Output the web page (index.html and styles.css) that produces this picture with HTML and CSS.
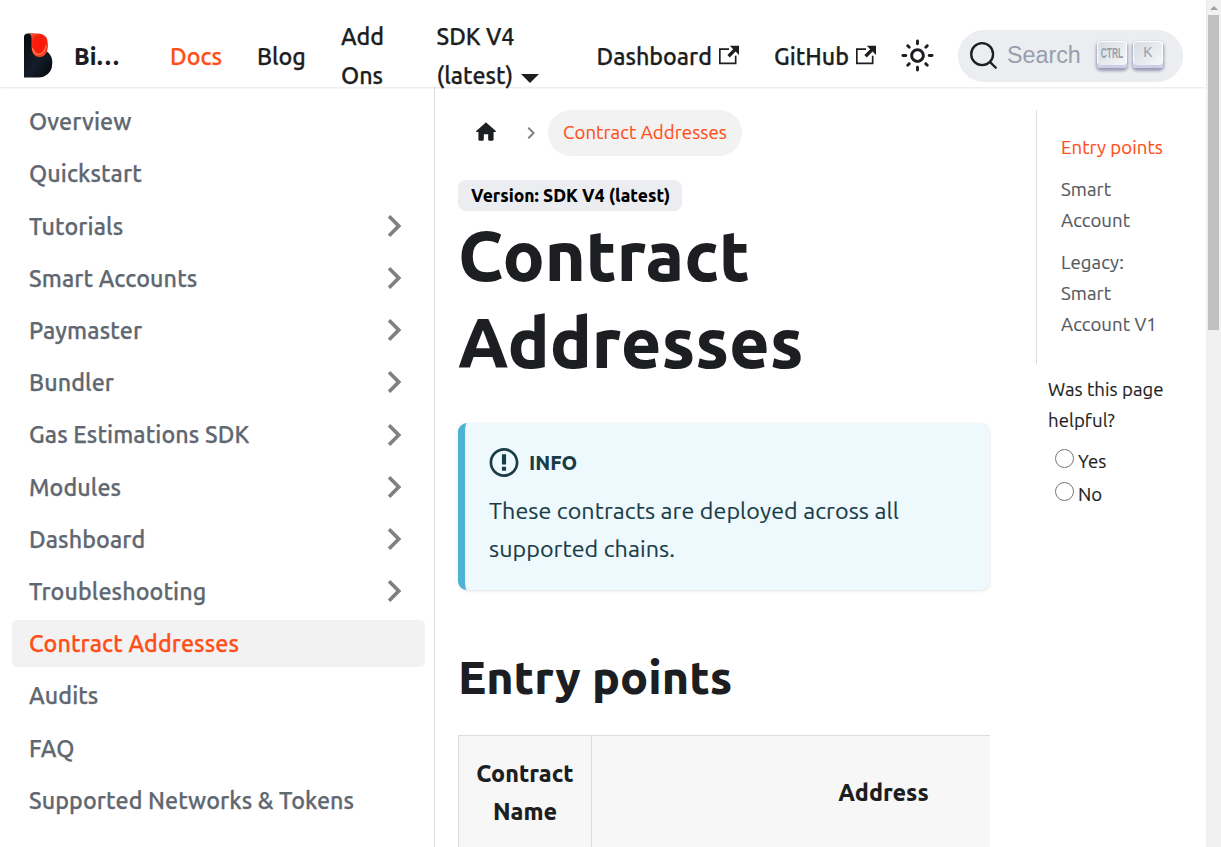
FILE: index.html
```html
<!DOCTYPE html>
<html lang="en">
<head>
<meta charset="utf-8">
<title>Contract Addresses</title>
<link rel="stylesheet" href="styles.css">
</head>
<body>
<svg class="defs" width="0" height="0">
  <symbol id="chev" viewBox="0 0 24 24"><path fill="currentColor" d="M8.59 16.59L13.17 12 8.59 7.41 10 6l6 6-6 6z"/></symbol>
  <symbol id="ext" viewBox="0 0 24 24"><path fill="currentColor" d="M21 13v10h-21v-19h12v2h-10v15h17v-8h2zm3-12h-10.988l4.035 4-6.977 7.07 2.828 2.828 6.977-7.07 4.125 4.172v-11z"/></symbol>
</svg>
<div class="window">
<div class="page">
  <nav class="navbar">
    <svg class="logo" viewBox="0 0 29 45">
      <defs>
        <linearGradient id="body" x1="0" y1="0" x2="1" y2="1"><stop offset="0" stop-color="#08090c"/><stop offset=".55" stop-color="#141d29"/><stop offset="1" stop-color="#07080b"/></linearGradient>
        <radialGradient id="drop" cx=".55" cy=".45" r=".6"><stop offset="0" stop-color="#ff1408"/><stop offset=".6" stop-color="#f5200f"/><stop offset="1" stop-color="#ff5a30"/></radialGradient>
      </defs>
      <path fill="url(#body)" d="M0 44.500V4Q0 .5 4 .5H10L23.500 19Q28.300 22.500 28.300 30Q28.300 40 20 43.500Q17.500 44.500 14 44.500Z"/>
      <path fill="url(#drop)" d="M5.500 .5H15Q24 1 24 12Q23.500 24 15.500 24Q7.500 23.500 7.500 14V6Q7.500 2 5.500 .5Z"/>
      <path fill="none" stroke="#ff7a4c" stroke-width="1.200" d="M8.500 15Q10 21.500 15 21.500Q20.500 20.500 22.500 12"/>
    </svg>
    <b class="brand">Bi…</b>
    <a class="nav-docs">Docs</a>
    <a class="nav-blog">Blog</a>
    <a class="nav-add">Add<br>Ons</a>
    <a class="nav-sdk">SDK V4<br><span>(latest)</span><i class="caret"></i></a>
    <a class="nav-dash"><span>Dashboard</span><svg class="ext"><use href="#ext"/></svg></a>
    <a class="nav-git"><span>GitHub</span><svg class="ext"><use href="#ext"/></svg></a>
    <svg class="sun" viewBox="0 0 24 24"><path fill="currentColor" d="M12,9c1.650,0,3,1.350,3,3s-1.350,3-3,3s-3-1.350-3-3S10.350,9,12,9 M12,7c-2.760,0-5,2.240-5,5s2.240,5,5,5s5-2.240,5-5 S14.760,7,12,7L12,7z M2,13l2,0c0.550,0,1-0.450,1-1s-0.450-1-1-1l-2,0c-0.550,0-1,0.450-1,1S1.450,13,2,13z M20,13l2,0c0.550,0,1-0.450,1-1 s-0.450-1-1-1l-2,0c-0.550,0-1,0.450-1,1S19.450,13,20,13z M11,2v2c0,0.550,0.450,1,1,1s1-0.450,1-1V2c0-0.550-0.450-1-1-1S11,1.450,11,2z M11,20v2c0,0.550,0.450,1,1,1s1-0.450,1-1v-2c0-0.550-0.450-1-1-1C11.450,19,11,19.450,11,20z M5.990,4.580c-0.390-0.390-1.030-0.390-1.410,0 c-0.390,0.390-0.390,1.030,0,1.410l1.060,1.060c0.390,0.390,1.030,0.390,1.410,0s0.390-1.030,0-1.410L5.990,4.580z M18.360,16.950 c-0.390-0.390-1.030-0.390-1.410,0c-0.390,0.390-0.390,1.030,0,1.410l1.060,1.060c0.390,0.390,1.030,0.390,1.410,0c0.390-0.390,0.390-1.030,0-1.410 L18.360,16.950z M19.420,5.990c0.390-0.390,0.390-1.030,0-1.410c-0.390-0.390-1.030-0.390-1.410,0l-1.060,1.060c-0.390,0.390-0.390,1.030,0,1.410 s1.030,0.390,1.410,0L19.420,5.990z M7.050,18.360c0.390-0.390,0.390-1.030,0-1.410c-0.390-0.390-1.030-0.390-1.410,0l-1.060,1.060 c-0.390,0.390-0.390,1.030,0,1.410s1.030,0.390,1.410,0L7.050,18.360z"/></svg>
    <div class="search">
      <svg class="glass" viewBox="0 0 20 20"><path d="M14.386 14.386l4.088 4.088-4.088-4.088c-2.942 2.942-7.711 2.942-10.653 0s-2.942-7.711 0-10.653 7.711-2.942 10.653 0 2.942 7.711 0 10.653z" stroke="currentColor" fill="none" stroke-width="1.600" stroke-linecap="round" stroke-linejoin="round"/></svg>
      <span class="placeholder">Search</span>
      <kbd class="key"><span class="ctrl">CTRL</span></kbd>
      <kbd class="key">K</kbd>
    </div>
  </nav>
  <div class="columns">
    <aside class="sidebar">
      <a class="item">Overview</a>
      <a class="item">Quickstart</a>
      <a class="item">Tutorials<svg class="chev"><use href="#chev"/></svg></a>
      <a class="item">Smart Accounts<svg class="chev"><use href="#chev"/></svg></a>
      <a class="item">Paymaster<svg class="chev"><use href="#chev"/></svg></a>
      <a class="item">Bundler<svg class="chev"><use href="#chev"/></svg></a>
      <a class="item">Gas Estimations SDK<svg class="chev"><use href="#chev"/></svg></a>
      <a class="item">Modules<svg class="chev"><use href="#chev"/></svg></a>
      <a class="item">Dashboard<svg class="chev"><use href="#chev"/></svg></a>
      <a class="item">Troubleshooting<svg class="chev"><use href="#chev"/></svg></a>
      <a class="item active">Contract Addresses</a>
      <a class="item">Audits</a>
      <a class="item">FAQ</a>
      <a class="item">Supported Networks &amp; Tokens</a>
    </aside>
    <main class="doc">
      <div class="crumbs">
        <svg class="home" viewBox="0 0 24 24"><path fill="currentColor" d="M10 19v-5h4v5c0 .55.45 1 1 1h3c.55 0 1-.45 1-1v-7h1.700c.46 0 .68-.57.33-.87L12.670 3.600c-.38-.34-.96-.34-1.340 0l-8.360 7.530c-.34.3-.13.87.33.87H5v7c0 .55.45 1 1 1h3c.55 0 1-.45 1-1z"/></svg>
        <svg class="sep"><use href="#chev"/></svg>
        <span class="pill">Contract Addresses</span>
      </div>
      <span class="badge">Version: SDK V4 (latest)</span>
      <h1>Contract<br>Addresses</h1>
      <section class="info">
        <div class="info-head">
          <svg class="info-icon" viewBox="0 0 14 16"><path fill="currentColor" fill-rule="evenodd" d="M7 2.300c3.140 0 5.700 2.560 5.700 5.700s-2.560 5.700-5.700 5.700A5.710 5.710 0 0 1 1.300 8c0-3.140 2.560-5.700 5.700-5.700zM7 1C3.140 1 0 4.140 0 8s3.140 7 7 7 7-3.140 7-7-3.140-7-7-7zm1 3H6v5h2V4zm0 6H6v2h2v-2z"/></svg>
          <b>INFO</b>
        </div>
        <p>These contracts are deployed across all<br>supported chains.</p>
      </section>
      <h2>Entry points</h2>
      <div class="table">
        <div class="th name"><span>Contract</span><span>Name</span></div>
        <div class="th address">Address</div>
      </div>
    </main>
    <aside class="right">
      <div class="toc">
        <a class="on">Entry points</a>
        <a>Smart<br>Account</a>
        <a>Legacy:<br>Smart<br>Account V1</a>
      </div>
      <div class="ask">Was this page<br>helpful?</div>
      <label class="opt"><i class="radio"></i><span>Yes</span></label>
      <label class="opt"><i class="radio"></i><span>No</span></label>
    </aside>
  </div>
</div>
<div class="scrollbar"><i class="up"></i><div class="thumb"></div></div>
</div>
</body>
</html>
```
FILE: styles.css
```css
* { box-sizing: border-box; }
body { margin: 0; overflow: hidden; background: #fff; color: #1c1e21; font-family: Ubuntu, "Noto Sans", sans-serif; font-size: 23.270px; font-weight: 400; line-height: 38.4px; }
b { font-weight: 780; }
.defs { display: block; position: absolute; }
.window { display: flex; width: 1221px; height: 847px; overflow: hidden; }
.page { flex: 1; display: flex; flex-direction: column; min-width: 0; }
span { white-space: nowrap; }

.navbar { position: relative; z-index: 2; height: 87px; flex: none; display: flex; align-items: center; padding: 24px 0 0 24px; background: #fff; box-shadow: 0 1px 2px rgba(0,0,0,.1); font-weight: 500; line-height: 39px; }
.navbar a, .brand { flex: none; white-space: nowrap; }
.navbar a, .item { -webkit-text-stroke: .25px currentColor; }
.logo { width: 29px; height: 45px; flex: none; }
.brand { width: 95px; padding: 1px 0 0 21px; }
.nav-docs { color: #ff4e17; width: 87px; padding: 1px 0 0 22px; }
.nav-blog { width: 84px; padding: 1px 0 0 22px; }
.nav-add { width: 96px; padding-left: 22px; }
.nav-sdk { width: 160px; padding-left: 21.500px; }
.nav-dash { width: 178px; padding: 1px 0 0 21.500px; }
.nav-git { width: 147px; padding: 1px 0 0 21px; }
.caret { display: inline-block; margin-left: 8px; border: 9px solid transparent; border-top-color: #1c1e21; border-bottom: 0; vertical-align: 1px; }
.ext { width: 20px; height: 20px; margin-left: 7px; vertical-align: 0; }
.sun { width: 35px; height: 35px; flex: none; }
.search { width: 225px; height: 52px; flex: none; margin-left: 23px; border-radius: 26px; background: #ebedf0; display: flex; align-items: center; padding-left: 11px; }
.glass { width: 29px; height: 29px; }
.placeholder { font: 400 23.270px/30px "Liberation Sans", sans-serif; color: #969faf; margin: -2px 0 0 9px; width: 90px; }
.key { width: 30px; height: 27px; flex: none; margin: -3px 6px 0 0; border-radius: 4px; background: linear-gradient(-225deg, #d5dbe4, #f8f8f8); box-shadow: inset 0 -3px 0 #cdcde6, inset 0 0 1px 1px #fff, 0 2px 3px 1px rgba(30,35,90,.4); color: #969faf; font: 400 14px/23px "Liberation Sans", sans-serif; text-align: center; }
.ctrl { display: inline-block; font-weight: 700; font-size: 15px; transform: scaleX(.56); margin: 0 -8px; }

.columns { flex: 1; display: flex; min-height: 0; }
.sidebar { width: 435px; flex: none; border-right: 1px solid #dadde1; padding: 11px 9px 0 12px; display: flex; flex-direction: column; gap: 5.190px; }
.item { height: 47px; flex: none; border-radius: 5px; padding: 0 9.500px 0 17px; display: flex; align-items: center; justify-content: space-between; color: #606770; font-weight: 500; letter-spacing: .1px; }
.item.active { background: #f2f2f2; color: #ff4e17; }
.chev { width: 44px; height: 44px; color: #808080; }

.doc { width: 556px; flex: none; padding: 23px 0 0 23px; display: flex; flex-direction: column; align-items: flex-start; overflow: hidden; }
.crumbs { display: flex; align-items: center; height: 46px; }
.home { width: 26px; height: 26px; margin: -3px 0 0 15px; }
.sep { width: 24px; height: 24px; margin-left: 20px; color: #808080; }
.pill { height: 46px; width: 194px; margin-left: 5px; border-radius: 23px; background: #f2f2f2; color: #ff4e17; font-size: 18.620px; line-height: 45px; padding-left: 15px; letter-spacing: .07px; }
.badge { margin-top: 24px; width: 224px; height: 31px; border-radius: 8px; background: #ebedf0; color: #000; font-size: 17.450px; font-weight: 770; line-height: 31px; padding-left: 13px; }
h1 { margin: 1px 0 0; font-size: 69.800px; line-height: 87px; font-weight: 770; }
.info { width: 532px; height: 167px; margin-top: 37px; padding: 20px 0 0 24px; border-left: 7px solid #4cb3d4; border-radius: 9px; background: #eef9fd; color: #193c47; box-shadow: 0 1px 3px rgba(0,0,0,.12); }
.info-head { display: flex; align-items: center; gap: 10px; height: 39px; font-size: 19.800px; }
.info-head b { padding-top: 1px; }
.info-icon { width: 30px; height: 33px; }
.info p { margin: 8.500px 0 0; letter-spacing: .08px; }
.info p, .pill, .right { -webkit-text-stroke: .15px currentColor; }
h2 { margin: 58px 0 0; font-size: 46.540px; line-height: 58px; font-weight: 770; white-space: nowrap; }
.table { margin-top: 29px; width: 532px; height: 112px; flex: none; display: flex; background: #f7f7f7; border: 1px solid #dadde1; border-width: 1px 0 0 1px; overflow: hidden; }
.th { font-weight: 770; display: flex; align-items: center; justify-content: center; flex: none; white-space: nowrap; padding-top: 1px; }
.name { width: 133px; flex-direction: column; border-right: 1px solid #dadde1; }
.address { width: 583px; }

.right { width: 215px; padding: 23px 0 0 45px; font-size: 18.620px; letter-spacing: .05px; line-height: 30.700px; }
.toc { height: 254px; border-left: 1px solid #dadde1; padding: 22.800px 0 0 24px; display: flex; flex-direction: column; gap: 11.700px; color: #525860; white-space: nowrap; }
.toc .on { color: #ff4e17; }
.ask { margin: 11px 0 0 12px; }
.opt { display: flex; align-items: center; height: 33px; margin-left: 19px; gap: 4px; }
.opt span { padding-top: 2px; }
.ask + .opt { margin-top: 8px; }
.radio { width: 19px; height: 19px; border: 1px solid #767676; border-radius: 50%; margin-bottom: 5px; }
.scrollbar { width: 15px; background: #f1f1f1; padding: 5px 2px 0; display: flex; flex-direction: column; align-items: center; }
.up { border: 4px solid transparent; border-top: 0; border-bottom-color: #a0a0a0; margin-top: 1px; }
.thumb { width: 11px; height: 315px; margin-top: 5px; background: #c1c1c1; }
```
